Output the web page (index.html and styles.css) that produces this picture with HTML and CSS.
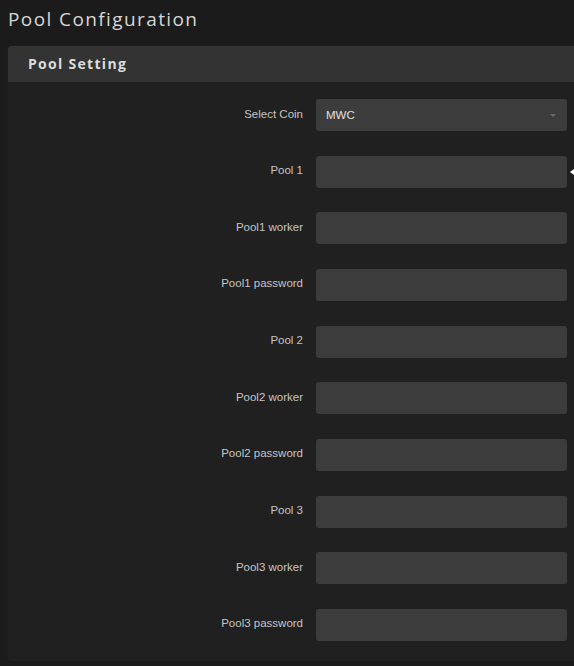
FILE: index.html
```html
<!DOCTYPE html>
<html>
<head>
<meta charset="utf-8">
<link rel="stylesheet" href="styles.css">
</head>
<body>
<h1 class="title">Pool Configuration</h1>
<section class="card">
  <div class="card-head">Pool Setting</div>
  <div class="form">
    <label class="lbl">Select Coin</label>
    <div class="field select"><span>MWC</span><i class="caret"></i></div>
    <label class="lbl">Pool 1</label>
    <div class="field with-tip"><i class="tip"></i></div>
    <label class="lbl">Pool1 worker</label>
    <div class="field"></div>
    <label class="lbl">Pool1 password</label>
    <div class="field"></div>
    <label class="lbl">Pool 2</label>
    <div class="field"></div>
    <label class="lbl">Pool2 worker</label>
    <div class="field"></div>
    <label class="lbl">Pool2 password</label>
    <div class="field"></div>
    <label class="lbl">Pool 3</label>
    <div class="field"></div>
    <label class="lbl">Pool3 worker</label>
    <div class="field"></div>
    <label class="lbl">Pool3 password</label>
    <div class="field"></div>
  </div>
</section>
</body>
</html>
```
FILE: styles.css
```css
html, body {
  margin: 0;
  padding: 0;
  background: #1b1b1b;
  overflow: hidden;
  height: 666px;
}
body {
  padding: 0 0 0 8px;
  font-family: "Liberation Sans", Arial, sans-serif;
}
.title {
  margin: 0;
  height: 46px;
  box-sizing: border-box;
  padding-top: 6px;
  font-family: "Open Sans", sans-serif;
  font-weight: 400;
  font-size: 19px;
  letter-spacing: 1.4px;
  color: #d6d6d6;
  line-height: 26px;
}
.card {
  background: #202020;
  border-radius: 4px 0 0 4px;
  box-shadow: -1px 0 0 0 #1d1d1d;
}
.card-head {
  height: 36px;
  box-sizing: border-box;
  background: #333333;
  border-radius: 4px 0 0 0;
  padding-left: 20px;
  font-family: "Open Sans", sans-serif;
  font-weight: 700;
  font-size: 14px;
  letter-spacing: 1.3px;
  color: #dcdcdc;
  line-height: 36px;
}
.form {
  display: grid;
  grid-template-columns: 295px 251px;
  column-gap: 13px;
  row-gap: 24.67px;
  padding: 17px 0 20px;
}
.lbl {
  display: flex;
  align-items: center;
  justify-content: flex-end;
  height: 32px;
  padding-bottom: 3px;
  box-sizing: border-box;
  font-size: 11.5px;
  color: #c4c4c4;
}
.field {
  position: relative;
  height: 32px;
  background: #3c3c3c;
  border-radius: 3px;
}
.select {
  display: flex;
  align-items: center;
  padding: 0 10px;
  box-sizing: border-box;
  font-size: 11.5px;
  color: #e0e0e0;
}
.select span { flex: 1; padding-bottom: 1px; }
.caret {
  width: 0;
  height: 0;
  border-left: 3px solid transparent;
  border-right: 3px solid transparent;
  border-top: 3px solid #6a6a6a;
  margin-right: 1px;
}
.tip {
  position: absolute;
  left: 254px;
  top: 13px;
  width: 0;
  height: 0;
  border-top: 3px solid transparent;
  border-bottom: 3px solid transparent;
  border-right: 4px solid #ffffff;
}
.tip::after {
  content: "";
  position: absolute;
  left: 3px;
  top: -1px;
  width: 4px;
  height: 2px;
  background: #ffffff;
}
```
